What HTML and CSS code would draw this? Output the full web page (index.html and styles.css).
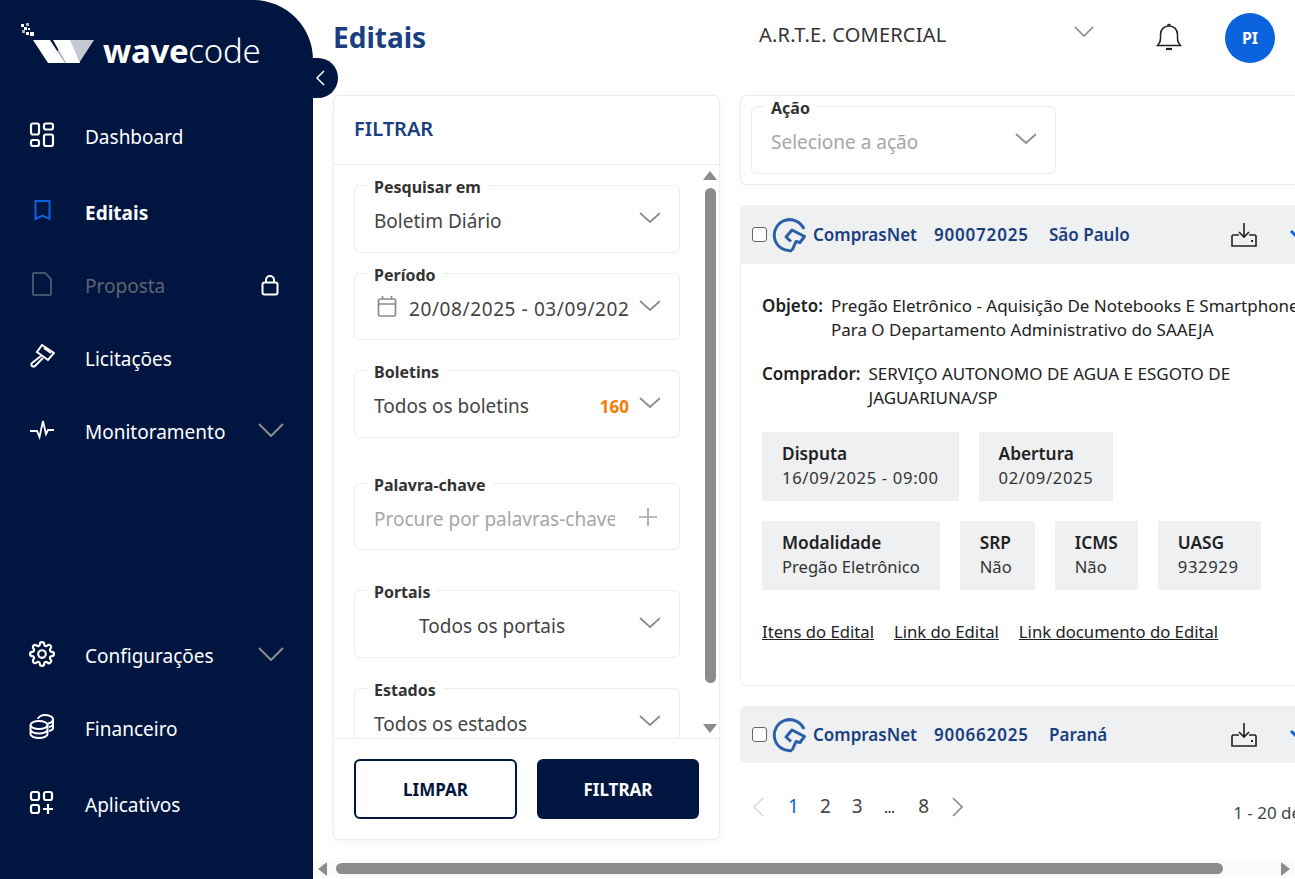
FILE: index.html
```html
<!DOCTYPE html>
<html lang="pt-BR">
<head>
    <meta charset="UTF-8">
    <title>Editais</title>
    <link rel="stylesheet" href="styles.css">
</head>
<body>
<div class="app">
    <aside class="sidebar">
        <div class="logo">
            <svg class="logo-dots" width="14" height="14" viewBox="0 0 14 14" fill="#fff">
                <rect x="0" y="1" width="3" height="3"/><rect x="5" y="0" width="3" height="3" opacity=".7"/>
                <rect x="3" y="4" width="3" height="3"/><rect x="1" y="7" width="3" height="3" opacity=".7"/>
                <rect x="7" y="5" width="2" height="2"/><rect x="9" y="9" width="4" height="4"/>
                <rect x="5" y="9" width="3" height="3"/>
            </svg>
            <svg class="logo-mark" width="62" height="24" viewBox="0 0 62 24">
                <polygon points="36,1 61,1 46,24 40,12" fill="#c3c8d2"/>
                <polygon points="22,15 26,10 36,24 29,24" fill="#9aa3b5"/>
                <polygon points="0,1 17,1 32,24 15,24" fill="#fff"/>
                <polygon points="20,1 37,1 47,24 33,24" fill="#fff"/>
            </svg>
            <span class="logo-text"><b>wave</b>code</span>
        </div>

        <nav class="nav">
            <a class="nav-item nav-first">
                <svg class="nav-icon" viewBox="0 0 26 26" fill="none" stroke="#fff" stroke-width="2.2"><rect x="2" y="1.5" width="8" height="11" rx="2"/><rect x="15" y="1.5" width="9" height="6" rx="2"/><rect x="2" y="18" width="8" height="6" rx="2"/><rect x="15" y="12.5" width="9" height="11.5" rx="2"/></svg>
                <span>Dashboard</span>
            </a>
            <a class="nav-item nav-active">
                <svg class="nav-icon" viewBox="0 0 26 26" fill="none" stroke="#0a62dc" stroke-width="2"><path d="M6.500 3h14v18l-7-3.500-7 3.500z"/></svg>
                <span>Editais</span>
            </a>
            <a class="nav-item nav-locked">
                <svg class="nav-icon" viewBox="0 0 26 26" fill="none" stroke="#46536e" stroke-width="2"><path d="M4 3a1 1 0 0 1 1-1h11l6 6v15a1 1 0 0 1-1 1H5a1 1 0 0 1-1-1z"/></svg>
                <span>Proposta</span>
                <svg class="nav-end lock" viewBox="0 0 18 22" fill="none" stroke="#fff" stroke-width="2"><rect x="1.500" y="8.500" width="15" height="12" rx="2"/><path d="M5 8V6a4 4 0 0 1 8 0v2"/></svg>
            </a>
            <a class="nav-item">
                <svg class="nav-icon" viewBox="0 0 26 26" fill="none" stroke="#fff" stroke-width="2"><path d="M13 1l12 8-6 7-11-8z"/><path d="M15 4l7 5M12 12L3 19a2 2 0 0 0 3 3l8-8"/></svg>
                <span>Licitações</span>
            </a>
            <a class="nav-item">
                <svg class="nav-icon" viewBox="0 0 26 26" fill="none" stroke="#fff" stroke-width="1.800"><path d="M1 14h7l2.500 6L14 4l3 13 2-4h6"/></svg>
                <span>Monitoramento</span>
                <svg class="nav-end chev" viewBox="0 0 26 14" fill="none" stroke="#8b8b8b" stroke-width="2"><path d="M1 1l12 12L25 1"/></svg>
            </a>
        </nav>

        <nav class="nav nav-bottom">
            <a class="nav-item">
                <svg class="nav-icon" viewBox="0 0 24 24" fill="none" stroke="#fff" stroke-width="2" stroke-linejoin="round"><circle cx="12" cy="12" r="3.500"/><path d="M19.400 15a1.700 1.700 0 0 0 .3 1.800l.1.100a2 2 0 1 1-2.900 2.900l-.1-.1a1.700 1.700 0 0 0-2.800 1.200V21a2 2 0 0 1-4 0v-.1a1.700 1.700 0 0 0-2.800-1.200l-.1.100a2 2 0 1 1-2.900-2.900l.1-.1a1.700 1.700 0 0 0-1.200-2.800H3a2 2 0 0 1 0-4h.1a1.700 1.700 0 0 0 1.200-2.800l-.1-.1a2 2 0 1 1 2.900-2.900l.1.100a1.700 1.700 0 0 0 2.800-1.200V3a2 2 0 0 1 4 0v.1a1.700 1.700 0 0 0 2.800 1.200l.1-.1a2 2 0 1 1 2.900 2.900l-.1.100a1.700 1.700 0 0 0 1.200 2.800h.1a2 2 0 0 1 0 4h-.1a1.700 1.700 0 0 0-1.500 1z"/></svg>
                <span>Configurações</span>
                <svg class="nav-end chev" viewBox="0 0 26 14" fill="none" stroke="#8b8b8b" stroke-width="2"><path d="M1 1l12 12L25 1"/></svg>
            </a>
            <a class="nav-item nav-last-gap">
                <svg class="nav-icon" viewBox="0 0 26 26" fill="none" stroke="#fff" stroke-width="2"><ellipse cx="10" cy="11" rx="8.500" ry="4"/><path d="M1.500 11v9c0 2.200 3.800 4 8.500 4s8.500-1.800 8.500-4v-9M1.500 15.500c0 2.200 3.800 4 8.500 4s8.500-1.800 8.500-4"/><path d="M9 5c0-2 3.500-4 7-4s8 1.500 8 4-2 4-5 4.500M24 5v9c0 1-1.500 2.500-4 3M24 10c0 1-1.500 2.500-4 3"/></svg>
                <span>Financeiro</span>
            </a>
            <a class="nav-item">
                <svg class="nav-icon" viewBox="0 0 26 26" fill="none" stroke="#fff" stroke-width="2.200"><rect x="2" y="2" width="8" height="8" rx="2"/><rect x="15" y="2" width="8" height="8" rx="2"/><rect x="2" y="15" width="8" height="8" rx="2"/><path d="M19 14v10M14 19h10"/></svg>
                <span>Aplicativos</span>
            </a>
        </nav>
    </aside>

    <button class="collapse">
        <svg width="10" height="16" viewBox="0 0 10 16" fill="none" stroke="#fff" stroke-width="1.500"><path d="M9 1L2 8l7 7"/></svg>
    </button>

    <main class="content">
        <header class="topbar">
            <h1 class="page-title">Editais</h1>
            <div class="company">A.R.T.E. COMERCIAL</div>
            <svg class="chev-top" width="20" height="12" viewBox="0 0 20 12" fill="none" stroke="#8b8b8b" stroke-width="1.700"><path d="M1 1l9 9 9-9"/></svg>
            <svg class="bell" width="26" height="30" viewBox="0 0 26 30" fill="none" stroke="#222" stroke-width="1.500"><path d="M1.500 23.500c2-2 3-4 3-7v-4c0-5 3.500-8.500 8.500-8.500s8.500 3.500 8.500 8.500v4c0 3 1 5 3 7z"/><path d="M11.500 3.500a1.700 1.700 0 0 1 3 0"/><path d="M10 27h6" stroke-width="2.200"/></svg>
            <div class="avatar">PI</div>
        </header>

        <div class="columns">
            <section class="panel filter">
                <div class="filter-head">FILTRAR</div>
                <div class="filter-scroll">
                    <div class="filter-fields">
                        <fieldset class="field">
                            <legend>Pesquisar em</legend>
                            <div class="field-row">
                                <span class="value">Boletim Diário</span>
                                <svg class="chev" viewBox="0 0 20 12" fill="none" stroke="#8b8b8b" stroke-width="1.700"><path d="M1 1l10 9 10-9"/></svg>
                            </div>
                        </fieldset>
                        <fieldset class="field field-short">
                            <legend>Período</legend>
                            <div class="field-row">
                                <svg class="cal" width="20" height="22" viewBox="0 0 20 22" fill="none" stroke="#8b8b8b" stroke-width="1.700"><rect x="1.500" y="3" width="17" height="17" rx="1.500"/><path d="M1.500 8h17M5.500 0v3M14.500 0v3"/></svg>
                                <span class="value value-clip value-date">20/08/2025 - 03/09/2025</span>
                                <svg class="chev" viewBox="0 0 20 12" fill="none" stroke="#8b8b8b" stroke-width="1.700"><path d="M1 1l10 9 10-9"/></svg>
                            </div>
                        </fieldset>
                        <fieldset class="field gap-big">
                            <legend>Boletins</legend>
                            <div class="field-row">
                                <span class="value">Todos os boletins</span>
                                <span class="count">160</span>
                                <svg class="chev" viewBox="0 0 20 12" fill="none" stroke="#8b8b8b" stroke-width="1.700"><path d="M1 1l10 9 10-9"/></svg>
                            </div>
                        </fieldset>
                        <fieldset class="field field-short gap-huge">
                            <legend>Palavra-chave</legend>
                            <div class="field-row">
                                <span class="value value-clip muted">Procure por palavras-chave</span>
                                <svg class="plus" width="18" height="18" viewBox="0 0 18 18" stroke="#a6a6a6" stroke-width="1.700"><path d="M9 0v18M0 9h18"/></svg>
                            </div>
                        </fieldset>
                        <fieldset class="field gap-wide">
                            <legend>Portais</legend>
                            <div class="field-row">
                                <span class="value value-center">Todos os portais</span>
                                <svg class="chev" viewBox="0 0 20 12" fill="none" stroke="#8b8b8b" stroke-width="1.700"><path d="M1 1l10 9 10-9"/></svg>
                            </div>
                        </fieldset>
                        <fieldset class="field gap-big">
                            <legend>Estados</legend>
                            <div class="field-row">
                                <span class="value">Todos os estados</span>
                                <svg class="chev" viewBox="0 0 20 12" fill="none" stroke="#8b8b8b" stroke-width="1.700"><path d="M1 1l10 9 10-9"/></svg>
                            </div>
                        </fieldset>
                    </div>
                    <div class="vscroll">
                        <span class="arrow-up"></span>
                        <span class="vthumb"></span>
                        <span class="arrow-down"></span>
                    </div>
                </div>
                <div class="filter-foot">
                    <button class="btn btn-outline">LIMPAR</button>
                    <button class="btn btn-solid">FILTRAR</button>
                </div>
            </section>

            <section class="results">
                <div class="panel action-bar">
                    <fieldset class="field action-field">
                        <legend>Ação</legend>
                        <div class="field-row">
                            <span class="value muted">Selecione a ação</span>
                            <svg class="chev" viewBox="0 0 20 12" fill="none" stroke="#8b8b8b" stroke-width="1.700"><path d="M1 1l10 9 10-9"/></svg>
                        </div>
                    </fieldset>
                </div>

                <article class="card">
                    <div class="card-head">
                        <span class="check"></span>
                        <svg class="portal-logo" width="36" height="36" viewBox="0 0 36 36" fill="none" stroke="#2b5fa8" stroke-width="3" stroke-linejoin="round"><path d="M20 33.500A15.500 15.500 0 1 1 32 12"/><path d="M20 33.500l4-9 4 1 4.500-6L20 13l-6 7 5 4.500"/></svg>
                        <span class="portal">ComprasNet</span>
                        <span class="num">900072025</span>
                        <span class="uf">São Paulo</span>
                        <svg class="dl" width="26" height="24" viewBox="0 0 26 24" fill="none" stroke="#222" stroke-width="1.600"><path d="M13 0v14M8 9l5 5 5-5M8 12H2l-1 1v10h24V13l-1-1h-6"/><path d="M20 18h2" stroke-width="2"/></svg>
                        <svg class="mark" width="12" height="10" viewBox="0 0 12 10" fill="none" stroke="#0a62dc" stroke-width="3"><path d="M1 1l5 5 5-5"/></svg>
                    </div>
                    <div class="card-body">
                        <div class="line"><b>Objeto:</b><p>Pregão Eletrônico - Aquisição De Notebooks E Smartphones Para O Departamento Administrativo do SAAEJA</p></div>
                        <div class="line line-last"><b>Comprador:</b><p>SERVIÇO AUTONOMO DE AGUA E ESGOTO DE JAGUARIUNA/SP</p></div>
                        <div class="tags">
                            <div class="tag"><b>Disputa</b><span class="digits">16/09/2025 - 09:00</span></div>
                            <div class="tag"><b>Abertura</b><span class="digits">02/09/2025</span></div>
                        </div>
                        <div class="tags">
                            <div class="tag"><b>Modalidade</b><span>Pregão Eletrônico</span></div>
                            <div class="tag tag-srp"><b>SRP</b><span>Não</span></div>
                            <div class="tag"><b>ICMS</b><span>Não</span></div>
                            <div class="tag tag-uasg"><b>UASG</b><span class="digits">932929</span></div>
                        </div>
                        <div class="links">
                            <a>Itens do Edital</a>
                            <a>Link do Edital</a>
                            <a>Link documento do Edital</a>
                        </div>
                    </div>
                </article>

                <article class="card">
                    <div class="card-head card-closed">
                        <span class="check"></span>
                        <svg class="portal-logo" width="36" height="36" viewBox="0 0 36 36" fill="none" stroke="#2b5fa8" stroke-width="3" stroke-linejoin="round"><path d="M20 33.500A15.500 15.500 0 1 1 32 12"/><path d="M20 33.500l4-9 4 1 4.500-6L20 13l-6 7 5 4.500"/></svg>
                        <span class="portal">ComprasNet</span>
                        <span class="num">900662025</span>
                        <span class="uf">Paraná</span>
                        <svg class="dl" width="26" height="24" viewBox="0 0 26 24" fill="none" stroke="#222" stroke-width="1.600"><path d="M13 0v14M8 9l5 5 5-5M8 12H2l-1 1v10h24V13l-1-1h-6"/><path d="M20 18h2" stroke-width="2"/></svg>
                        <svg class="mark" width="12" height="10" viewBox="0 0 12 10" fill="none" stroke="#0a62dc" stroke-width="3"><path d="M1 1l5 5 5-5"/></svg>
                    </div>
                </article>

                <div class="pager">
                    <svg width="12" height="20" viewBox="0 0 12 20" fill="none" stroke="#d9d9d9" stroke-width="1.700"><path d="M11 1L2 10l9 9"/></svg>
                    <span class="page page-on">1</span>
                    <span class="page">2</span>
                    <span class="page">3</span>
                    <span class="page page-dots">...</span>
                    <span class="page page-last">8</span>
                    <svg width="12" height="20" viewBox="0 0 12 20" fill="none" stroke="#8b8b8b" stroke-width="1.700"><path d="M1 1l9 9-9 9"/></svg>
                    <span class="total">1 - 20 de 160</span>
                </div>
            </section>
        </div>

        <div class="hscroll">
            <span class="arrow-left"></span>
            <span class="hthumb"></span>
            <span class="arrow-right"></span>
        </div>
    </main>
</div>
</body>
</html>
```

FILE: styles.css
```css
* {
    margin: 0;
    padding: 0;
    box-sizing: border-box;
}

body {
    font-family: "Noto Sans", "Open Sans", sans-serif;
    color: #333;
    background-color: #fff;
    overflow: hidden;
}

.app {
    display: flex;
    width: 1295px;
    height: 879px;
    position: relative;
    overflow: hidden;
}

/* sidebar */
.sidebar {
    width: 313px;
    flex: none;
    background-color: #001641;
    border-top-right-radius: 60px;
    display: flex;
    flex-direction: column;
    color: #fff;
    padding-bottom: 52px;
}

.logo {
    height: 79px;
    margin-top: 36px;
    padding-left: 33px;
    display: flex;
    align-items: flex-start;
    gap: 8px;
    position: relative;
}

.logo-dots {
    position: absolute;
    left: 21px;
    top: -13px;
}

.logo-text {
    font-size: 33px;
    font-weight: 300;
    line-height: 30px;
    letter-spacing: -0.3px;
}

.logo-text b {
    font-weight: 700;
}

.logo-mark {
    margin-top: 3px;
}

.nav {
    display: flex;
    flex-direction: column;
    gap: 29px;
}

.nav-bottom {
    margin-top: auto;
}

.nav-item {
    height: 44px;
    padding-left: 29px;
    display: flex;
    align-items: center;
    font-size: 19px;
    position: relative;
}

.nav-first,
.nav-last-gap {
    margin-bottom: 3px;
}

.nav-icon {
    width: 26px;
    height: 26px;
    flex: none;
    margin-right: 30px;
    margin-top: -4px;
}

.nav-active {
    font-weight: 700;
}

.nav-locked {
    color: #5d6470;
}

.nav-end {
    position: absolute;
}

.lock {
    left: 261px;
    top: 10px;
    width: 18px;
    height: 22px;
}

.chev {
    width: 22px;
    height: 12px;
    flex: none;
}

.nav-end.chev {
    left: 258px;
    top: 13px;
    width: 26px;
    height: 14px;
}

.collapse {
    position: absolute;
    left: 313px;
    top: 58px;
    width: 25px;
    height: 40px;
    border: none;
    background-color: #001641;
    border-radius: 0 20px 20px 0;
    padding-right: 11px;
    display: flex;
    align-items: center;
    justify-content: center;
}

/* main area */
.content {
    flex: 1;
    min-width: 0;
    display: flex;
    flex-direction: column;
}

.topbar {
    height: 75px;
    padding-left: 20px;
    display: flex;
    align-items: center;
    flex: none;
}

.page-title {
    font-size: 28px;
    font-weight: 700;
    color: #1a3f80;
    width: 426px;
    margin-top: -2px;
}

.company {
    font-size: 20px;
    letter-spacing: 0.2px;
    color: #333;
    width: 315px;
    margin-top: -7px;
}

.chev-top {
    margin-top: -11px;
}

.bell {
    margin-left: 62px;
    margin-top: -2px;
}

.avatar {
    width: 50px;
    height: 50px;
    margin-left: 43px;
    border-radius: 50%;
    background-color: #0a62dc;
    color: #fff;
    font-size: 16px;
    font-weight: 700;
    display: flex;
    align-items: center;
    justify-content: center;
}

.columns {
    flex: 1;
    min-height: 0;
    padding: 20px 0 0 20px;
    display: flex;
    gap: 20px;
}

.panel {
    background-color: #fff;
    border: 1px solid #ececec;
    border-radius: 6px;
    box-shadow: 0 2px 12px rgba(0, 0, 0, 0.04);
}

/* filter */
.filter {
    width: 387px;
    height: 745px;
    flex: none;
    display: flex;
    flex-direction: column;
}

.filter-head {
    height: 69px;
    flex: none;
    padding-left: 20px;
    line-height: 66px;
    font-size: 20px;
    font-weight: 600;
    color: #1a3f80;
    border-bottom: 1px solid #ececec;
}

.filter-scroll {
    flex: 1;
    min-height: 0;
    display: flex;
    overflow: hidden;
}

.filter-fields {
    width: 366px;
    flex: none;
    padding: 7px 0 0 20px;
}

.field {
    border: 1px solid #ececec;
    border-radius: 6px;
    width: 326px;
    min-width: 0;
    height: 81px;
    margin-bottom: 7px;
    padding: 0 19px;
}

.field-short {
    height: 80px;
}

.field legend {
    margin-left: -7px;
    padding: 4px 7px 0;
    font-size: 16px;
    line-height: 22px;
    font-weight: 700;
    color: #333;
}

.gap-big {
    margin-top: 17px;
}

.gap-wide {
    margin-top: 27px;
}

.gap-huge {
    margin-top: 32px;
}

.field-row {
    display: flex;
    align-items: center;
    height: 28px;
    margin-top: 9px;
}

.value {
    font-size: 19px;
    line-height: 28px;
    color: #444;
    flex: 1;
    white-space: nowrap;
    min-width: 0;
}

.value-clip {
    overflow: hidden;
}

.value-date {
    letter-spacing: 0.6px;
}

.value-center {
    padding-left: 45px;
}

.muted {
    color: #a6a6a6;
}

.field-row .chev {
    margin-left: 9px;
    margin-top: -6px;
}

.cal {
    flex: none;
    margin-left: 3px;
    margin-right: 12px;
    margin-top: -4px;
}

.count {
    font-size: 17px;
    font-weight: 700;
    color: #f57c00;
}

.plus {
    flex: none;
    margin-left: 24px;
    margin-right: 3px;
    margin-top: -4px;
}

.vscroll {
    width: 14px;
    margin-left: 3px;
    padding-top: 6px;
    padding-bottom: 5px;
    display: flex;
    flex-direction: column;
    align-items: center;
}

.vthumb {
    width: 11px;
    flex: 1;
    margin: 8px 0 41px;
    background-color: #8c8c8c;
    border-radius: 6px;
}

.arrow-up {
    border: 7px solid transparent;
    border-top: none;
    border-bottom: 9px solid #8c8c8c;
}

.arrow-down {
    border: 7px solid transparent;
    border-bottom: none;
    border-top: 9px solid #8c8c8c;
}

.filter-foot {
    height: 101px;
    flex: none;
    border-top: 1px solid #ececec;
    padding: 20px 20px 0;
    display: flex;
    gap: 20px;
}

.btn {
    height: 60px;
    font-family: inherit;
    font-size: 17px;
    font-weight: 700;
    border-radius: 6px;
}

.btn-outline {
    width: 163px;
    background-color: #fff;
    color: #001641;
    border: 2px solid #001641;
}

.btn-solid {
    width: 162px;
    background-color: #001641;
    color: #fff;
    border: none;
}

/* results */
.results {
    width: 600px;
    flex: none;
}

.action-bar {
    height: 90px;
    padding: 0 10px;
    border-right: none;
}

.action-field {
    width: 305px;
    margin: -3px 0 0;
}

.card {
    margin-top: 20px;
    border-radius: 6px;
}

.card-head {
    height: 59px;
    background-color: #eff0f2;
    border-radius: 6px 6px 0 0;
    padding-left: 12px;
    display: flex;
    align-items: center;
    font-size: 17px;
    font-weight: 600;
    color: #1a3f80;
}

.card-closed {
    height: 57px;
    border-radius: 6px;
}

.check {
    width: 15px;
    height: 15px;
    border: 1px solid #666;
    border-radius: 3px;
    background-color: #fff;
    flex: none;
}

.portal-logo {
    margin-left: 5px;
    flex: none;
}

.portal {
    margin-left: 5px;
    width: 121px;
}

.num {
    width: 115px;
    letter-spacing: 0.8px;
}

.uf {
    width: 182px;
}

.mark {
    margin-left: 33px;
}

.card-body {
    height: 422px;
    padding: 30px 0 0 21px;
    border: 1px solid #ececec;
    border-top: none;
    border-radius: 0 0 6px 6px;
    font-size: 17px;
    color: #333;
}

.line {
    display: flex;
    gap: 8px;
    line-height: 24px;
    margin-bottom: 20px;
    color: #222;
}

.line-last {
    margin-bottom: 22px;
}

.line b {
    font-weight: 600;
    flex: none;
}

.line p {
    width: 480px;
}

.tags {
    display: flex;
    gap: 20px;
    margin-bottom: 20px;
}

.tag {
    background-color: #eff0f2;
    height: 69px;
    padding: 10px 20px;
    display: flex;
    flex-direction: column;
    line-height: 24px;
    color: #333;
}

.tag span {
    font-size: 16.6px;
}

.tag .digits {
    letter-spacing: 0.66px;
}

.tag b {
    color: #222;
    font-size: 17.3px;
    font-weight: 600;
}

.tag-srp {
    min-width: 75px;
}

.tag-uasg {
    min-width: 103px;
}

.links {
    display: flex;
    gap: 20px;
    margin-top: 30px;
    font-size: 16.7px;
    line-height: 24px;
    color: #222;
}

.links a {
    text-decoration: underline;
}

.pager {
    display: flex;
    align-items: center;
    margin-top: 30px;
    padding-left: 12px;
    height: 28px;
    font-size: 19px;
    color: #444;
    white-space: nowrap;
}

.page {
    margin-right: 21px;
    margin-top: -2px;
}

.page-on {
    color: #0a62dc;
    margin-left: 24px;
}

.page-dots {
    letter-spacing: -1px;
    margin-right: 24px;
    font-size: 17px;
}

.page-last {
    margin-right: 23px;
}

.total {
    font-size: 17px;
    margin-left: 269px;
    padding-top: 10px;
}

.hscroll {
    height: 17px;
    flex: none;
    margin-bottom: 2px;
    padding: 0 5px;
    display: flex;
    align-items: center;
    background-color: #fafafa;
}

.hthumb {
    width: 887px;
    height: 11px;
    margin-left: 9px;
    background-color: #8c8c8c;
    border-radius: 6px;
}

.arrow-left {
    border: 7px solid transparent;
    border-left: none;
    border-right: 9px solid #8c8c8c;
}

.arrow-right {
    border: 7px solid transparent;
    border-right: none;
    border-left: 9px solid #8c8c8c;
    margin-left: auto;
}
```
